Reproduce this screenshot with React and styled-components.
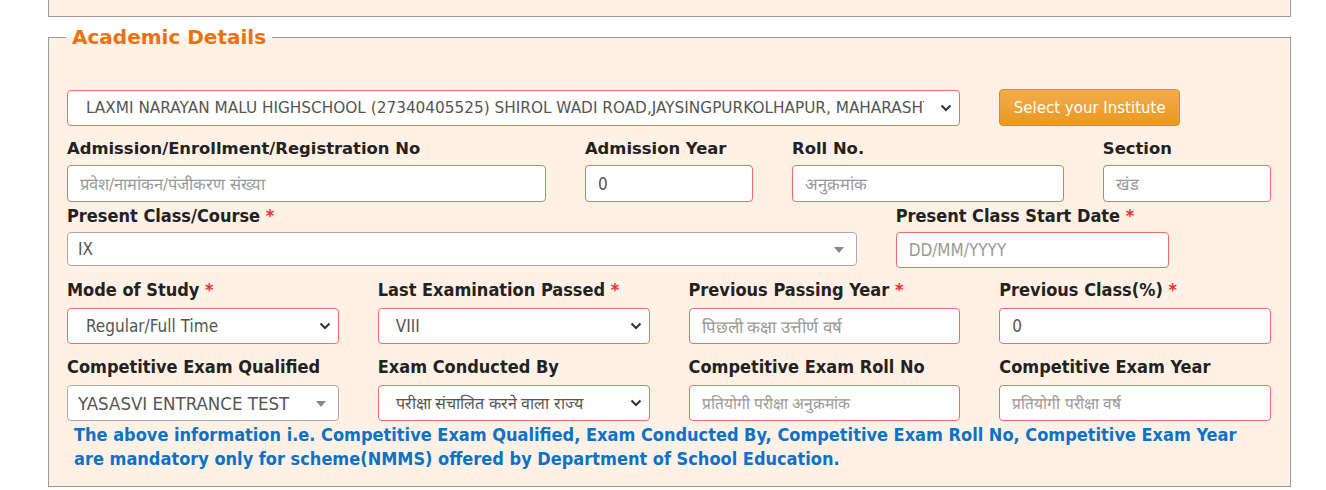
import React from "react";
import styled, { createGlobalStyle } from "styled-components";

const Global = createGlobalStyle`
  body {
    margin: 0;
    background: #ffffff;
    font-family: "DejaVu Sans", Verdana, sans-serif;
  }
`;

const Page = styled.div`
  padding-left: 48px;
  width: 1243px;
`;

const TopBox = styled.div`
  height: 18px;
  margin-top: -1px;
  background: #fff1e6;
  border: 1px solid #a09a96;
  border-top: none;
  box-sizing: border-box;
`;

const Fieldset = styled.fieldset`
  margin: 8px 0 0 0;
  padding: 0 18px 15px 18px;
  background: #fff1e6;
  border: 1px solid #a09a96;
  min-width: 0;
  box-sizing: border-box;
`;

const Legend = styled.legend`
  margin-left: -1px;
  padding: 0 6px;
  color: #ec7210;
  font-weight: bold;
  font-size: 20px;
  font-family: "DejaVu Sans", Verdana, sans-serif;
`;

const Grid = styled.div`
  display: grid;
  grid-template-columns: repeat(12, 1fr);
  column-gap: 39px;
  width: 1204px;
  margin-top: ${(p) => p.top || 0}px;
`;

const Col = styled.div`
  grid-column: span ${(p) => p.span};
  display: flex;
  flex-direction: column;
  align-items: flex-start;
`;

const Label = styled.label`
  font-family: ${(p) =>
    p.narrow
      ? `"DejaVu Sans Condensed", "DejaVu Sans", sans-serif`
      : `"DejaVu Sans", Verdana, sans-serif`};
  font-weight: bold;
  font-size: ${(p) => (p.narrow ? 18 : 16.4)}px;
  color: #222;
  height: 18px;
  line-height: 18px;
  margin-bottom: ${(p) => (p.narrow && !p.tight ? 9 : 7)}px;
  white-space: nowrap;
  span {
    color: #f0302a;
  }
`;

const Field = styled.div`
  position: relative;
  width: ${(p) => (p.w ? p.w + "px" : "100%")};
  height: ${(p) => p.h || 36}px;
  box-sizing: border-box;
  background: #fff;
  border: 1px solid ${(p) => (p.gray ? "#aaa" : "#f26a6a")};
  border-radius: 4px;
  display: flex;
  align-items: center;
  padding-left: ${(p) => p.pl || 12}px;
  font-family: ${(p) =>
    p.narrow
      ? `"DejaVu Sans Condensed", "DejaVu Sans", sans-serif`
      : `"DejaVu Sans", Verdana, sans-serif`};
  font-size: ${(p) => p.fs || 17}px;
  color: ${(p) => (p.placeholder ? "#9a9a9a" : "#555")};
  white-space: nowrap;
  overflow: hidden;
`;

const Chevron = styled.svg`
  position: absolute;
  right: 7px;
  top: 50%;
  margin-top: -4px;
`;

const Caret = styled.div`
  position: absolute;
  right: 12px;
  top: 50%;
  margin-top: -2px;
  width: 0;
  height: 0;
  border-left: 5px solid transparent;
  border-right: 5px solid transparent;
  border-top: 6px solid #888;
`;

const TextClip = styled.div`
  overflow: hidden;
  width: ${(p) => p.w}px;
  white-space: nowrap;
`;

const OrangeButton = styled.button`
  width: 181px;
  height: 37px;
  border: 1px solid #e08e1b;
  border-radius: 4px;
  background: linear-gradient(#f0ad4e, #ec971f);
  color: #fff;
  font-family: "DejaVu Sans", Verdana, sans-serif;
  font-size: 15px;
  padding: 0;
  margin-top: -1px;
`;

const Note = styled.p`
  margin: 2px 0 0 7px;
  color: #0b72c7;
  font-family: "DejaVu Sans Condensed", "DejaVu Sans", sans-serif;
  font-weight: bold;
  font-size: 18px;
  line-height: 24px;
  width: 1190px;
`;

const Down = () => (
  <Chevron width="12" height="8" viewBox="0 0 12 8">
    <path d="M1.5 1.5 L6 6 L10.5 1.5" fill="none" stroke="#333" strokeWidth="2" />
  </Chevron>
);

export default function App() {
  return (
    <Page>
      <Global />
      <TopBox />
      <Fieldset>
        <Legend>Academic Details</Legend>
        <Grid top={41}>
          <Col span={9}>
            <Field pl={18} fs={15.3}>
              <TextClip w={838}>
                LAXMI NARAYAN MALU HIGHSCHOOL (27340405525) SHIROL WADI ROAD,JAYSINGPURKOLHAPUR, MAHARASHTRA
              </TextClip>
              <Down />
            </Field>
          </Col>
          <Col span={3}>
            <OrangeButton>Select your Institute</OrangeButton>
          </Col>
        </Grid>

        <Grid top={14}>
          <Col span={5}>
            <Label>Admission/Enrollment/Registration No</Label>
            <Field h={37} placeholder narrow fs={16.5}>प्रवेश/नामांकन/पंजीकरण संख्या</Field>
          </Col>
          <Col span={2}>
            <Label>Admission Year</Label>
            <Field h={37} narrow>0</Field>
          </Col>
          <Col span={3}>
            <Label>Roll No.</Label>
            <Field h={37} placeholder narrow fs={16.5}>अनुक्रमांक</Field>
          </Col>
          <Col span={2}>
            <Label>Section</Label>
            <Field h={37} placeholder narrow fs={16.5}>खंड</Field>
          </Col>
        </Grid>

        <Grid top={5}>
          <Col span={8}>
            <Label narrow tight>
              Present Class/Course <span>*</span>
            </Label>
            <Field gray h={34} pl={10} narrow fs={17}>
              IX
              <Caret />
            </Field>
          </Col>
          <Col span={4}>
            <Label narrow tight>
              Present Class Start Date <span>*</span>
            </Label>
            <Field w={273} h={36} placeholder narrow>DD/MM/YYYY</Field>
          </Col>
        </Grid>

        <Grid top={13}>
          <Col span={3}>
            <Label narrow>
              Mode of Study <span>*</span>
            </Label>
            <Field pl={18} narrow>
              Regular/Full Time
              <Down />
            </Field>
          </Col>
          <Col span={3}>
            <Label narrow>
              Last Examination Passed <span>*</span>
            </Label>
            <Field pl={17} narrow>
              VIII
              <Down />
            </Field>
          </Col>
          <Col span={3}>
            <Label narrow>
              Previous Passing Year <span>*</span>
            </Label>
            <Field placeholder narrow fs={16.8}>पिछली कक्षा उत्तीर्ण वर्ष</Field>
          </Col>
          <Col span={3}>
            <Label narrow>
              Previous Class(%) <span>*</span>
            </Label>
            <Field narrow>0</Field>
          </Col>
        </Grid>

        <Grid top={14}>
          <Col span={3}>
            <Label narrow>Competitive Exam Qualified</Label>
            <Field gray pl={10} narrow fs={18.5}>
              YASASVI ENTRANCE TEST
              <Caret />
            </Field>
          </Col>
          <Col span={3}>
            <Label narrow>Exam Conducted By</Label>
            <Field pl={17} narrow fs={16}>
              परीक्षा संचालित करने वाला राज्य
              <Down />
            </Field>
          </Col>
          <Col span={3}>
            <Label narrow>Competitive Exam Roll No</Label>
            <Field placeholder narrow fs={15.5}>प्रतियोगी परीक्षा अनुक्रमांक</Field>
          </Col>
          <Col span={3}>
            <Label narrow>Competitive Exam Year</Label>
            <Field placeholder narrow fs={15.5}>प्रतियोगी परीक्षा वर्ष</Field>
          </Col>
        </Grid>

        <Note>
          The above information i.e. Competitive Exam Qualified, Exam Conducted By, Competitive Exam Roll No, Competitive Exam Year
          <br />
          are mandatory only for scheme(NMMS) offered by Department of School Education.
        </Note>
      </Fieldset>
    </Page>
  );
}
